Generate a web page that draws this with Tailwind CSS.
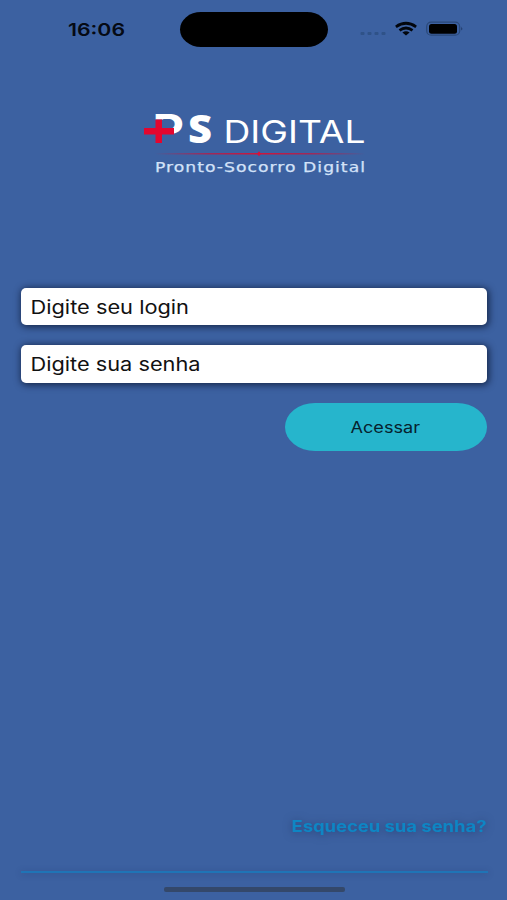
<!DOCTYPE html>
<html lang="pt-BR">
<head>
  <meta charset="UTF-8">
  <meta name="viewport" content="width=device-width, initial-scale=1">
  <title>PS Digital</title>
  <script src="https://cdn.jsdelivr.net/npm/@tailwindcss/browser@4"></script>
</head>
<body class="bg-[#3c61a1] font-['Inter','Liberation_Sans',sans-serif]">
  <div class="flex flex-col h-[900px] w-[507px] overflow-hidden">

    <!-- Barra de status -->
    <header class="flex h-[59px] shrink-0 pt-3">
      <div class="w-[180px] pl-[68px] pt-[5px]">
        <svg class="block" width="60" height="24">
          <text x="0" y="18.500" textLength="57" lengthAdjust="spacingAndGlyphs" font-size="17.5" font-weight="600" fill="#050a14">16:06</text>
        </svg>
      </div>
      <div class="w-[148px] h-[35px] bg-black rounded-[21px/17.5px]"></div>
      <div class="flex pl-8">
        <svg class="block" width="106" height="35" viewBox="360 12 106 35">
          <g fill="#2f5288">
            <rect x="360.5" y="32" width="4" height="3" rx="1"/>
            <rect x="367.5" y="32" width="4" height="3" rx="1"/>
            <rect x="374.5" y="32" width="4" height="3" rx="1"/>
            <rect x="381.5" y="32" width="4" height="3" rx="1"/>
          </g>
          <g fill="none" stroke="#02060d" stroke-width="2.8">
            <path d="M395.9 26.8Q406 19.8 416.1 26.8"/>
            <path d="M399.5 30.3Q406 25.6 412.5 30.3"/>
          </g>
          <path d="M402.4 32.5Q406 30.2 409.6 32.5L406 35.4Z" fill="#02060d"/>
          <rect x="426.7" y="22.2" width="33" height="13" rx="4.5" fill="none" stroke="#2a4878" stroke-width="1.2"/>
          <rect x="429" y="24" width="28" height="9.7" rx="2.5" fill="#000"/>
          <path d="M461.3 26.6q1.8 2 0 4z" fill="#1c3560"/>
        </svg>
      </div>
    </header>

    <!-- Logo -->
    <div class="pl-[140px] pt-[39px] h-[229px] shrink-0">
      <svg class="block overflow-visible" width="230" height="92" viewBox="140 98 230 92">
        <defs>
          <linearGradient id="linha">
            <stop offset="0" stop-color="#c4183f" stop-opacity="0"/>
            <stop offset=".25" stop-color="#b51c48" stop-opacity=".8"/>
            <stop offset=".5" stop-color="#d0143a"/>
            <stop offset=".75" stop-color="#b51c48" stop-opacity=".8"/>
            <stop offset="1" stop-color="#c4183f" stop-opacity="0"/>
          </linearGradient>
        </defs>
        <g fill="#fff">
          <text x="152.500" y="143" font-size="40" font-weight="700" textLength="31.500" lengthAdjust="spacingAndGlyphs">P</text>
          <text x="188" y="143" font-family="Open Sans, sans-serif" font-size="39" font-weight="800" textLength="24" lengthAdjust="spacingAndGlyphs">S</text>
          <text x="223.500" y="143" font-size="30.500" font-weight="400" textLength="142" lengthAdjust="spacingAndGlyphs">DIGITAL</text>
        </g>
        <!-- A cruz toma o lugar da haste do P -->
        <path d="M153 119.500h14v25h-14z" fill="#3c61a1"/>
        <path d="M155.500 119.500h6.500v8.500h12v6.500h-12v8.500h-6.500v-8.500h-11.500v-6.500h11.500z" fill="#e4062f"/>
        <rect x="155" y="153" width="210" height="1.500" fill="url(#linha)"/>
        <path d="M259 151.300l2 2.500-2 2.500-2-2.500z" fill="#d8103a"/>
        <text x="155" y="171.500" font-family="DejaVu Sans, sans-serif" font-size="13.500" letter-spacing=".8" fill="#d3e2f8" stroke="#d3e2f8" stroke-width=".25" textLength="211" lengthAdjust="spacingAndGlyphs">Pronto-Socorro Digital</text>
      </svg>
    </div>

    <!-- Formulário -->
    <main class="flex flex-col gap-5 pl-[21px] pr-5">
      <div class="h-[37px] bg-white rounded-[5px] pl-[9px] shadow-[1px_1px_7px_1px_rgba(10,20,45,0.75)]">
        <svg class="block" width="300" height="37">
          <text x="0.500" y="25.500" textLength="158.500" lengthAdjust="spacingAndGlyphs" font-size="18.500" fill="#111">Digite seu login</text>
        </svg>
      </div>
      <div class="h-[37.500px] bg-white rounded-[5px] pl-[9px] shadow-[1px_1px_7px_1px_rgba(10,20,45,0.75)]">
        <svg class="block" width="300" height="37">
          <text x="0.500" y="26" textLength="170" lengthAdjust="spacingAndGlyphs" font-size="18.500" fill="#111">Digite sua senha</text>
        </svg>
      </div>
      <button class="self-end w-[202px] h-[48px] bg-[#26b5cc] rounded-[30px/24px] pl-[65px]">
        <svg class="block" width="80" height="30">
          <text x="0.500" y="21" textLength="69.500" lengthAdjust="spacingAndGlyphs" font-size="15.500" font-weight="400" fill="#06222e">Acessar</text>
        </svg>
      </button>
    </main>

    <!-- Rodapé -->
    <footer class="mt-auto h-[90px] pl-[21px] pr-[19px]">
      <a class="flex justify-end h-[61px]">
        <svg class="block overflow-visible drop-shadow-[0_1px_4px_rgba(20,35,75,0.5)]" width="197" height="30">
          <text x="0.500" y="22" textLength="195" lengthAdjust="spacingAndGlyphs" font-size="15.500" font-weight="700" fill="#0e86c4">Esqueceu sua senha?</text>
        </svg>
      </a>
      <div class="h-[1.500px] bg-[#1f74b6] shadow-[0_1px_6px_rgba(30,45,95,0.4)]"></div>
      <div class="mt-[14.500px] ml-[143px] w-[181px] h-[5px] rounded-[2px] bg-[#34486a]"></div>
    </footer>
  </div>
</body>
</html>
